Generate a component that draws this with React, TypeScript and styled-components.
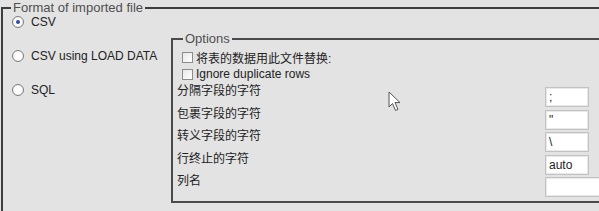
import React from "react";
import styled, { createGlobalStyle } from "styled-components";

const GlobalStyle = createGlobalStyle`
  html, body {
    margin: 0;
    padding: 0;
    background: #e3e3e3;
    overflow: hidden;
  }
  body {
    font-family: "Liberation Sans", Arial, "Noto Sans CJK SC", sans-serif;
    color: #222;
  }
`;

const options = [
  { id: "sep", label: "分隔字段的字符", value: ";" },
  { id: "enc", label: "包裹字段的字符", value: '"' },
  { id: "esc", label: "转义字段的字符", value: "\\" },
  { id: "term", label: "行终止的字符", value: "auto" },
  { id: "cols", label: "列名", value: "", wide: true },
];

function App() {
  return (
    <>
      <GlobalStyle />
      <Page>
        <Outer>
          <Legend>Format of imported file</Legend>
          <Body>
            <Formats>
              <RadioRow>
                <Radio $checked />
                <span>CSV</span>
              </RadioRow>
              <RadioRow>
                <Radio />
                <span>CSV using LOAD DATA</span>
              </RadioRow>
              <RadioRow>
                <Radio />
                <span>SQL</span>
              </RadioRow>
            </Formats>
            <Options>
              <Legend $inner>Options</Legend>
              <CheckRow>
                <Check />
                <span>将表的数据用此文件替换:</span>
              </CheckRow>
              <CheckRow>
                <Check />
                <span>Ignore duplicate rows</span>
              </CheckRow>
              <Table>
                {options.map((o) => (
                  <React.Fragment key={o.id}>
                    <Label>{o.label}</Label>
                    <Field $wide={o.wide}>{o.value}</Field>
                  </React.Fragment>
                ))}
              </Table>
            </Options>
          </Body>
        </Outer>
        <Cursor width="14" height="22" viewBox="0 0 14 22">
          <path
            d="M1 1 L1 16 L4.5 12.5 L7.5 19.5 L10 18.4 L7 11.6 L12 11.6 Z"
            fill="#fff"
            stroke="#555"
            strokeWidth="1"
            strokeLinejoin="round"
          />
        </Cursor>
      </Page>
    </>
  );
}

export default App;

const Page = styled.div`
  position: relative;
  width: 599px;
  height: 211px;
  overflow: hidden;
`;

const Outer = styled.fieldset`
  margin: 0 0 0 1px;
  padding: 0 0 30px 8px;
  border: 2px solid #3d3d3d;
  width: 640px;
  min-width: 0;
  box-sizing: border-box;
`;

const Legend = styled.legend<{ $inner?: boolean }>`
  padding: 0 2px;
  margin-left: ${(p) => (p.$inner ? "6px" : "0")};
  font-size: 13px;
  line-height: 15px;
  color: #4f4f4f;
`;

const Body = styled.div`
  display: flex;
  align-items: flex-start;
`;

const Formats = styled.div`
  width: 160px;
  flex: 0 0 160px;
  display: flex;
  flex-direction: column;
  gap: 20px;
`;

const RadioRow = styled.label`
  display: flex;
  align-items: center;
  gap: 7px;
  height: 14px;
  padding-left: 1px;
  font-size: 12px;
  color: #222;
  white-space: nowrap;
`;

const Radio = styled.span<{ $checked?: boolean }>`
  width: 12px;
  height: 12px;
  box-sizing: border-box;
  border-radius: 50%;
  border: 1px solid #7d7d7d;
  background: radial-gradient(circle, #ffffff 40%, #e6e6e6 100%);
  display: flex;
  align-items: center;
  justify-content: center;
  &::after {
    content: "";
    width: 4px;
    height: 4px;
    border-radius: 50%;
    background: ${(p) => (p.$checked ? "#2b4fa3" : "transparent")};
  }
`;

const Options = styled.fieldset`
  margin: 16px 0 0 0;
  padding: 0 0 4px 4px;
  border: 2px solid #4a4a4a;
  flex: 1;
  min-width: 0;
`;

const CheckRow = styled.label`
  display: flex;
  align-items: center;
  gap: 3px;
  height: 14px;
  margin: 4px 0 3px 5px;
  font-size: 12px;
  color: #222;
  white-space: nowrap;
  & + & {
    margin-top: 0;
  }
`;

const Check = styled.span`
  width: 11px;
  height: 11px;
  box-sizing: border-box;
  border: 1px solid #8c8c8c;
  background: linear-gradient(135deg, #e8e8e8, #ffffff);
`;

const Table = styled.div`
  display: grid;
  grid-template-columns: 368px 1fr;
  grid-auto-rows: 22.6px;
  align-items: start;
`;

const Label = styled.div`
  font-size: 12px;
  line-height: 14px;
  color: #222;
  white-space: nowrap;
`;

const Field = styled.div<{ $wide?: boolean }>`
  margin-top: 3px;
  width: ${(p) => (p.$wide ? "80px" : "44px")};
  height: 20px;
  box-sizing: border-box;
  border: 1px solid #c2c2c2;
  box-shadow: inset 0 0 0 1px #e9e9e9;
  background: #fff;
  padding: 0 3px;
  font-size: 12px;
  line-height: 18px;
  color: #222;
`;

const Cursor = styled.svg`
  position: absolute;
  left: 388px;
  top: 91px;
`;
